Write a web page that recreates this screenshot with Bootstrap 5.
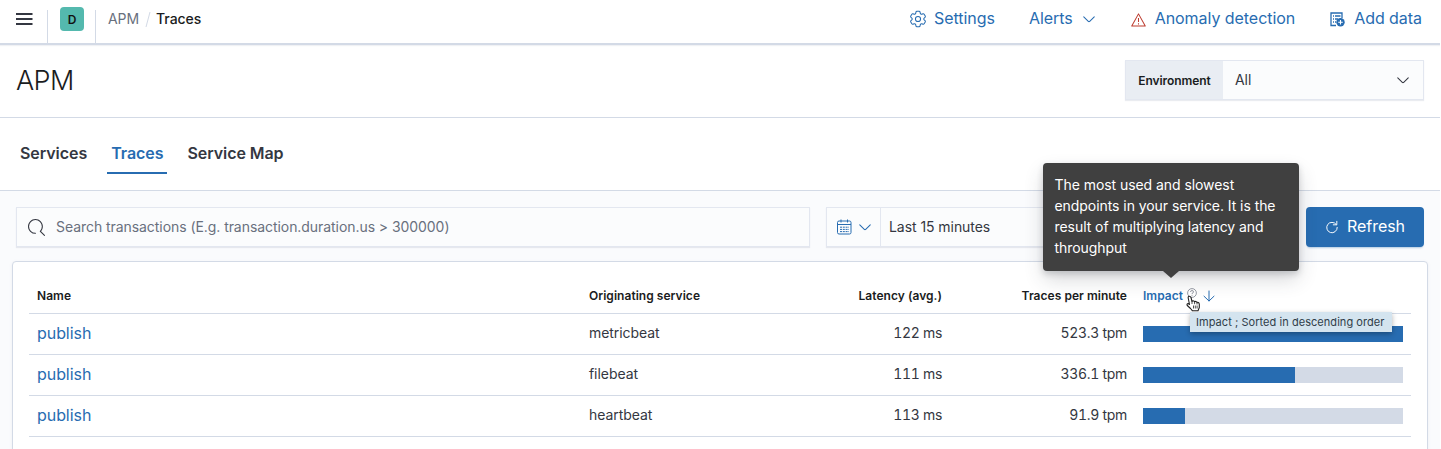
<!DOCTYPE html>
<html lang="en">
<head>
<meta charset="utf-8">
<title>APM - Traces</title>
<link href="https://cdn.jsdelivr.net/npm/bootstrap@5.3.0/dist/css/bootstrap.min.css" rel="stylesheet">
<script src="https://cdn.jsdelivr.net/npm/bootstrap@5.3.0/dist/js/bootstrap.bundle.min.js" defer></script>
<style>
:root{--line:#d3dae6;--blue:#276cb1;--ink:#343741;--dark:#1a1c21}
html,body{height:449px;overflow:hidden}
body{font-family:Inter,"Liberation Sans",sans-serif;font-size:14px;line-height:21px;letter-spacing:-.06px;color:var(--ink);background:#fff}
svg{display:block;flex:none}
a{color:var(--blue);text-decoration:none}
.page{width:1440px;height:449px;overflow:hidden}
.topbar{height:45px;border-bottom:2px solid var(--line);box-shadow:0 1px 1px rgba(152,162,179,.15)}
.crumbs{height:38px}
.burger{padding-left:16px}
.rule{width:1px;height:33px;background:var(--line);margin-top:10px}
.space-tag{width:24px;height:24px;border-radius:4px;background:#54b9ae;color:#111;font-size:12px;font-weight:600}
.trail{height:37px;margin-left:12px}
.raised{padding-bottom:2px}
.toplink{font-size:16px;line-height:24px;height:36px;padding-right:18px;letter-spacing:-.05px}
.toplink svg{margin-top:2px}
.titlebar{height:73px;border-bottom:1px solid var(--line);padding:0 16px}
h1{font-size:27px;font-weight:300;letter-spacing:-.6px;line-height:32px;color:var(--dark);margin-top:20px}
.field{height:40px;background:#fbfcfd;border:1px solid #e3e7f0;box-shadow:0 1px 1px rgba(152,162,179,.2)}
.env{width:299px;margin-top:15px}
.env-label{width:97px;background:#e9edf3;font-size:12px;font-weight:600;color:var(--dark);height:100%}
.tabbar{height:73px;border-bottom:1px solid var(--line);padding:16px 16px 0 16px}
.tabitem{height:40px;padding:7px 4px 0;font-size:16px;font-weight:600;line-height:24px;color:var(--ink)}
.tabitem.on{color:var(--blue);border-bottom:2px solid var(--blue)}
.content{background:#fafbfd;height:259px;padding:16px 12px 0}
.search{width:794px;color:#69707d;padding:0 11px}
.dates{width:472px}
.quick{width:54px;height:100%;border-right:1px solid #e3e7f0;padding-left:10px;gap:6px;color:var(--blue)}
.refresh{width:118px;height:40px;background:var(--blue);border-radius:4px;color:#fff;font-size:16px;box-shadow:0 2px 2px -1px rgba(39,108,177,.35)}
.sheet{height:220px;margin-top:14px;border:1px solid var(--line);border-radius:4px;background:#fff;padding:16px 16px 0;box-shadow:0 1px 3px rgba(152,162,179,.15)}
.traces{table-layout:fixed;width:1382px;border-collapse:separate;border-spacing:0}
.traces th{height:36px;padding:0 8px;font-size:12px;line-height:18px;letter-spacing:.04px;font-weight:600;color:var(--dark);border-bottom:1px solid var(--line);vertical-align:middle}
.traces td{height:41px;padding:0 8px 3px;border-bottom:1px solid var(--line);vertical-align:middle}
.traces td:first-child{padding-bottom:2px}
.traces td.text-end{font-feature-settings:"tnum";letter-spacing:-.3px}
.traces td a{font-size:16px;line-height:24px}
.traces td.bar-cell{padding:0 8px}
.traces th.sorted{color:var(--blue)}
.meter{height:16px;background:var(--line)}
.meter div{height:16px;background:var(--blue)}
.tip{position:absolute;left:-92px;top:-115px;width:256px;height:108px;border-radius:4px;background:#404040;color:#fff;font-size:14px;font-weight:400;line-height:21px;letter-spacing:-.06px;padding:11px 11.500px;box-shadow:0 9px 20px -1px rgba(52,55,65,.2),0 3px 6px rgba(52,55,65,.2);z-index:3}
.tip::after{content:"";position:absolute;left:120px;bottom:-7px;border:8px solid transparent;border-top:7px solid #404040;border-bottom:0}
.native{position:absolute;left:55px;top:34px;width:202px;height:20px;background:#d4e4ef;color:#2f3d49;font-size:11px;font-weight:400;line-height:20px;padding-left:6px;letter-spacing:.05px;white-space:nowrap;box-shadow:0 2px 5px rgba(0,0,0,.3);z-index:3}
.hand{position:absolute;left:51px;top:17px;z-index:4}
</style>
</head>
<body>
<div class="page">
  <header class="topbar d-flex">
    <div class="crumbs burger d-flex align-items-center"><svg width="17" height="38" viewBox="0 0 17 38" stroke="#343741" stroke-width="2"><path d="M0 14h16.500M0 19h16.500M0 24h16.500"/></svg></div>
    <div class="rule" style="margin-left:14px"></div>
    <div class="crumbs d-flex align-items-center" style="margin-left:12px"><div class="space-tag d-flex align-items-center justify-content-center">D</div></div>
    <div class="rule" style="margin-left:11px"></div>
    <nav class="trail d-flex align-items-center">
      <span style="color:#69707d">APM</span>
      <svg width="6" height="18" viewBox="0 0 6 18" style="margin-left:6px"><path d="M1 17L5 2" stroke="#d3dae6"/></svg>
      <span style="font-weight:500;color:#1a1c21;margin-left:5px">Traces</span>
    </nav>
    <nav class="toplink d-flex align-items-center ms-auto">
      <a href="#" class="d-flex align-items-center" style="gap:7px"><svg width="18" height="18" viewBox="1.500 1.500 21 21" fill="none" stroke="currentColor" stroke-width="1.200"><path d="M9.594 3.940c.09-.542.56-.94 1.110-.94h2.593c.55 0 1.020.398 1.110.94l.213 1.281c.063.374.313.686.645.87.074.04.147.083.22.127.325.196.72.257 1.075.124l1.217-.456a1.125 1.125 0 0 1 1.370.49l1.296 2.247a1.125 1.125 0 0 1-.26 1.431l-1.003.827c-.293.241-.438.613-.43.992a7.723 7.723 0 0 1 0 .255c-.008.378.137.75.43.991l1.004.827c.424.35.534.955.26 1.430l-1.298 2.247a1.125 1.125 0 0 1-1.369.491l-1.217-.456c-.355-.133-.75-.072-1.076.124a6.470 6.470 0 0 1-.22.128c-.331.183-.581.495-.644.869l-.213 1.281c-.09.543-.56.94-1.110.94h-2.594c-.55 0-1.019-.398-1.110-.94l-.213-1.281c-.062-.374-.312-.686-.644-.87a6.520 6.520 0 0 1-.22-.127c-.325-.196-.72-.257-1.076-.124l-1.217.456a1.125 1.125 0 0 1-1.369-.49l-1.297-2.247a1.125 1.125 0 0 1 .26-1.431l1.004-.827c.292-.24.437-.613.43-.991a6.932 6.932 0 0 1 0-.255c.007-.38-.138-.751-.43-.992l-1.004-.827a1.125 1.125 0 0 1-.26-1.430l1.297-2.247a1.125 1.125 0 0 1 1.370-.491l1.216.456c.356.133.751.072 1.076-.124.072-.044.146-.086.22-.128.332-.183.582-.495.644-.869l.214-1.280Z"/><circle cx="12" cy="12" r="3"/></svg>Settings</a>
      <a href="#" class="d-flex align-items-center" style="margin-left:34px;gap:9px">Alerts<svg width="14" height="14" viewBox="0 0 16 16" fill="none" stroke="currentColor" stroke-width="1.200" stroke-linecap="round"><path d="M2 5.500l5.200 5.200q.8.700 1.600 0L14 5.500"/></svg></a>
      <a href="#" class="d-flex align-items-center" style="margin-left:35px;gap:9px"><svg width="15" height="15" viewBox="0 0 16 16" fill="none" stroke="#bd3c2f" stroke-width="1.100" stroke-linejoin="round"><path d="M8 2L15.200 15H.8zM8 6.300v4.400M8 12v1.400"/></svg>Anomaly detection</a>
      <a href="#" class="d-flex align-items-center" style="margin-left:35px;gap:9px"><svg width="15" height="15" viewBox="0 0 15 15"><path d="M6 13.500H1V1h11v5M3 4h1M5 4h5.500M3 7h1M5 7h3M3 10h1M5 10h1" fill="none" stroke="currentColor" stroke-width="1.300"/><circle cx="10.500" cy="10.300" r="4.200" fill="currentColor"/><path d="M10.500 8v4.600M8.200 10.300h4.600" stroke="#fff" stroke-width="1.100"/></svg>Add data</a>
    </nav>
  </header>

  <div class="titlebar d-flex justify-content-between">
    <h1 class="mb-0">APM</h1>
    <div class="field env d-flex align-items-center">
      <div class="env-label d-flex align-items-center justify-content-center">Environment</div>
      <span class="flex-grow-1 raised" style="padding-left:12px">All</span>
      <svg width="14" height="14" viewBox="0 0 16 16" fill="none" stroke="#343741" stroke-width="1.200" stroke-linecap="round" style="margin-right:13px"><path d="M2 5.500l5.200 5.200q.8.700 1.600 0L14 5.500"/></svg>
    </div>
  </div>

  <nav class="tabbar d-flex gap-3">
    <a href="#" class="tabitem">Services</a>
    <a href="#" class="tabitem on">Traces</a>
    <a href="#" class="tabitem">Service Map</a>
  </nav>

  <main class="content">
    <div class="d-flex px-1">
      <div class="field search d-flex align-items-center"><svg width="17" height="17" viewBox="0 0 16 16" fill="#343741"><path d="M11.271 11.978l3.872 3.873a.502.502 0 00.708 0 .502.502 0 000-.708l-3.565-3.564c2.380-2.747 2.267-6.923-.342-9.532-2.730-2.730-7.170-2.730-9.898 0-2.728 2.729-2.728 7.170 0 9.900a6.955 6.955 0 004.949 2.050.5.5 0 000-1 5.960 5.960 0 01-4.242-1.757 6.010 6.010 0 010-8.486 6.004 6.004 0 018.484 0 6.010 6.010 0 010 8.486.5.5 0 00.034.738z"/></svg><span class="raised" style="margin-left:11px">Search transactions (E.g. transaction.duration.us &gt; 300000)</span></div>
      <div class="field dates d-flex align-items-center ms-3">
        <div class="quick d-flex align-items-center">
          <svg width="15" height="16" viewBox="0 0 15 16" fill="none" stroke="currentColor"><rect x=".5" y="2" width="13.500" height="13" rx="1.500"/><path d="M.5 5.500H14M4 .5V3.500M10.500 .5V3.500"/><path d="M3 8.200h9M3 10.400h9M3 12.600h9" stroke-dasharray="2 .8"/></svg>
          <svg width="14" height="14" viewBox="0 0 16 16" fill="none" stroke="currentColor" stroke-width="1.200" stroke-linecap="round"><path d="M2 5.500l5.200 5.200q.8.700 1.600 0L14 5.500"/></svg>
        </div>
        <span class="ps-2 raised">Last 15 minutes</span>
      </div>
      <div class="refresh d-flex align-items-center justify-content-center gap-2 ms-2"><svg width="14" height="14" viewBox="0 0 16 16" fill="none" stroke="#fff" stroke-width="1.100" stroke-linecap="round"><path d="M12.800 5A6 6 0 1 0 14 8.500M13.500 1.500V5.500H9.500"/></svg><span class="raised">Refresh</span></div>
    </div>

    <section class="sheet">
      <table class="traces">
        <colgroup><col style="width:552px"><col style="width:221px"><col style="width:148px"><col style="width:185px"><col style="width:276px"></colgroup>
        <thead><tr><th>Name</th><th>Originating service</th><th class="text-end">Latency (avg.)</th><th class="text-end">Traces per minute</th>
          <th class="sorted position-relative"><div class="d-flex align-items-center">Impact
            <svg width="10" height="10" viewBox="0 0 10 10" fill="none" stroke="#7d838e" stroke-width=".8" style="margin:-5px 0 0 4px"><circle cx="5" cy="5" r="4.400"/><path d="M3.500 4q0-1.500 1.500-1.500T6.500 4Q6.500 4.800 5 5.500V6.200M5 7v.8"/></svg>
            <svg width="12" height="12" viewBox="0 0 12 12" fill="none" stroke="currentColor" stroke-linecap="round" style="margin-left:6px"><path d="M6 1v10M1 6.200L6 11l5-4.800"/></svg></div>
            <div class="tip">The most used and slowest endpoints in your service. It is the result of multiplying latency and throughput</div>
            <div class="native">Impact ; Sorted in descending order</div>
            <svg class="hand" width="15" height="17" viewBox="0 0 15 17"><path d="M3.500 9.500L2.200 3Q2 1.300 3.200 1.200T5 2.500L6 6.500Q6.200 5.700 7.200 5.800T8.500 7Q8.800 6.200 9.800 6.500T11 7.700Q11.400 7 12.300 7.500T13.300 9.200V12.500L12 15.800H6.500L4.500 13.500 1.300 10.500Q.6 9.300 1.500 8.800T3.500 9.500z" fill="#fff" stroke="#222" stroke-width="1.100" stroke-linejoin="round"/><path d="M7.500 10.500v3M9.300 10.500v3M11.100 10.500v3M6 6.500v2.500M8.600 7.200v2M11 7.900v1.600" stroke="#222" stroke-width=".8"/></svg>
          </th></tr></thead>
        <tbody>
          <tr><td><a href="#">publish</a></td><td>metricbeat</td><td class="text-end">122 ms</td><td class="text-end">523.3 tpm</td><td class="bar-cell"><div class="meter"><div style="width:100%"></div></div></td></tr>
          <tr><td><a href="#">publish</a></td><td>filebeat</td><td class="text-end">111 ms</td><td class="text-end">336.1 tpm</td><td class="bar-cell"><div class="meter"><div style="width:58.5%"></div></div></td></tr>
          <tr><td><a href="#">publish</a></td><td>heartbeat</td><td class="text-end">113 ms</td><td class="text-end">91.9 tpm</td><td class="bar-cell"><div class="meter"><div style="width:16.1%"></div></div></td></tr>
        </tbody>
      </table>
    </section>
  </main>
</div>
</body>
</html>
